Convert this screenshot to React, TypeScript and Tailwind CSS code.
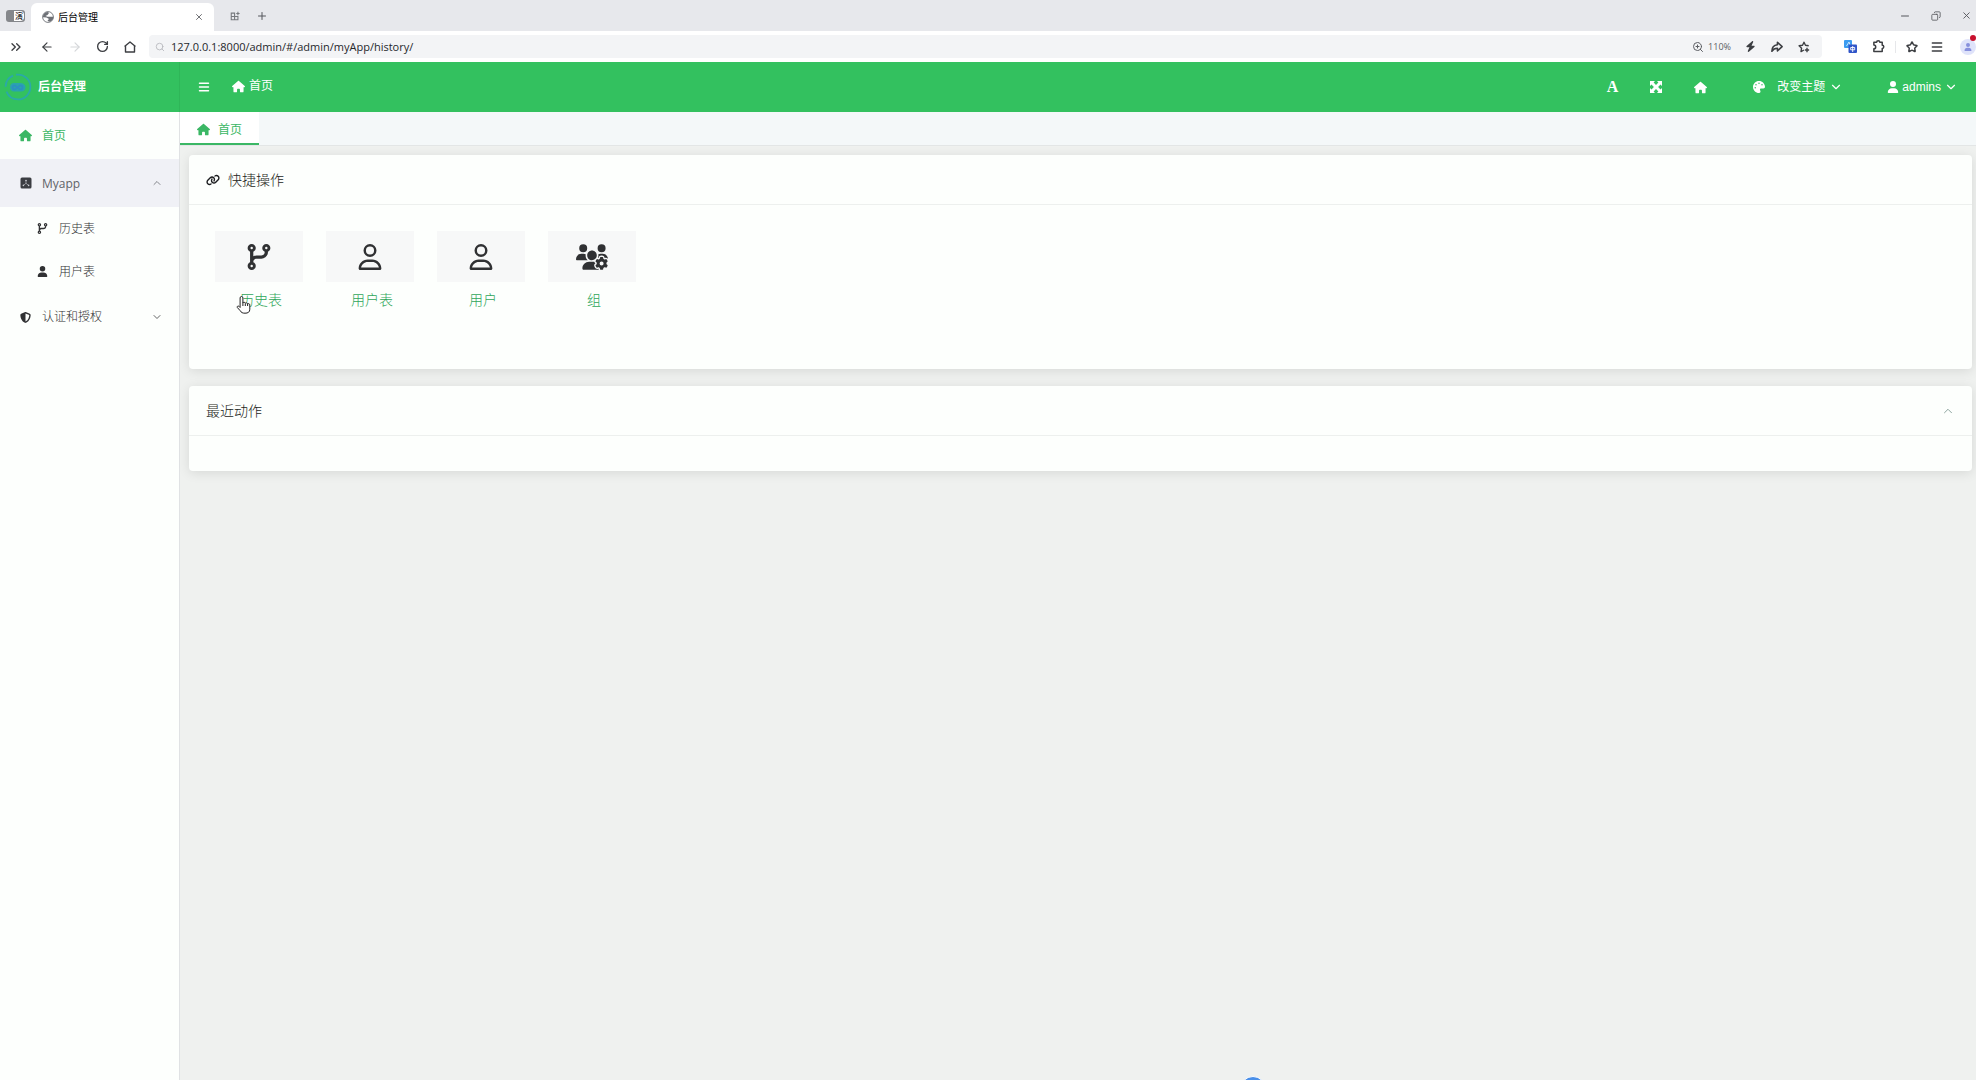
import React from "react";
import type { IconType } from "react-icons";
import {
  FaBars, FaBolt, FaCodeBranch, FaHouse, FaLink,
  FaPalette, FaRegUser, FaShieldHalved, FaUser, FaUsersGear,
} from "react-icons/fa6";
import {
  ChevronDown, ChevronUp, ChevronsRight, ArrowLeft, ArrowRight, Copy, Menu,
  Minus, Plus, RotateCw, Search, Star, X, ZoomIn,
} from "lucide-react";

interface LinkItem {
  label: string;
  icon: IconType;
}

const quickActions: LinkItem[] = [
  { label: "历史表", icon: FaCodeBranch },
  { label: "用户表", icon: FaRegUser },
  { label: "用户", icon: FaRegUser },
  { label: "组", icon: FaUsersGear },
];

const subItems: LinkItem[] = [
  { label: "历史表", icon: FaCodeBranch },
  { label: "用户表", icon: FaUser },
];

const AppSquare = () => (
  <svg viewBox="0 0 12 12" className="h-3 w-3">
    <rect x="0.5" y="0.5" width="11" height="11" rx="1.5" fill="#3b3d42" />
    <path d="M6 3.2v3L3.3 8.6M6 6.2l2.7 2.4" stroke="#a9abb1" strokeWidth="0.8" fill="none" />
    <circle cx="6" cy="3.5" r="0.8" fill="#c9cbd1" />
    <circle cx="3.4" cy="8.4" r="0.8" fill="#c9cbd1" />
    <circle cx="8.6" cy="8.4" r="0.8" fill="#c9cbd1" />
  </svg>
);

const Globe = () => (
  <svg viewBox="0 0 12 12" className="h-3 w-3">
    <circle cx="6" cy="6" r="5.4" fill="#fff" stroke="#6d7076" strokeWidth="0.9" />
    <path d="M1 5C1.5 2.5 3.5 1 6 1l1 1-1.5 2L3.5 5l2 .8h5.9c0 2.800-1.800 4.600-4.400 5L5.500 9.500 7 8 4.500 6.500 1 6.300z" fill="#6d7076" />
  </svg>
);

const Logo = () => (
  <svg viewBox="0 0 28 28" className="h-7 w-7">
    <circle cx="14" cy="14" r="12.4" fill="none" stroke="#2ba9a8" strokeWidth="1.8" strokeDasharray="34 5 14 3" />
    <path d="M9.500 10h6c3.200 0 6 1.500 6 4.300s-2 4.200-4.500 4.200H10c-2.500 0-4-1.700-4-4.200S7.500 10 9.500 10z" fill="#2aa3ae" />
    <path d="M10.500 12.500a2 2 0 1 0 0 4c2 0 4-4 6-4a2 2 0 1 1 0 4c-2 0-4-4-6-4z" fill="none" stroke="#2c8fc4" strokeWidth="1.4" />
  </svg>
);

const FullScreen = () => (
  <svg viewBox="0 0 12 12" className="h-3 w-3" fill="currentColor">
    <path d="M0 0h5L3.600 1.500 6 3.900l2.400-2.400L7 0h5v5l-1.500-1.400L8.100 6l2.400 2.400L12 7v5H7l1.400-1.500L6 8.100l-2.400 2.400L5 12H0V7l1.500 1.400L3.900 6 1.500 3.600 0 5z" />
  </svg>
);

const HandCursor = () => (
  <svg viewBox="0 0 16 20" className="pointer-events-none absolute left-[21px] top-16 h-5 w-4">
    <path d="M5.500 1.500c.9 0 1.400.6 1.400 1.400v5c.3-1 2.300-.8 2.400.4.500-.8 2.200-.6 2.300.6.600-.6 2.200-.3 2.200 1v4.300c0 3-1.800 4-4.800 4-2.500 0-3.700-.6-4.800-2.500L1.300 12.500c-.6-1.100.9-2 1.800-1.100l1 1.100V2.900c0-.8.500-1.400 1.400-1.400z" fill="#fff" stroke="#222" strokeWidth="1" />
    <path d="M6.900 7.500V11M9.300 8.500v2.500M11.600 9v2" stroke="#222" strokeWidth="1" />
  </svg>
);

const TabStrip = () => (
  <div className="flex h-[31px] items-center bg-[#e7e8ec] text-[#55575c]">
    <button aria-label="工作区" className="ml-1.5 mr-1.5 flex h-3 w-[19px] items-center justify-end rounded-[3px] bg-[#85878b] p-px">
      <span className="flex h-2.5 w-2.5 items-center justify-center rounded-r-sm bg-white text-[8px] leading-none text-black">演</span>
    </button>
    <div className="flex h-7 w-[183px] items-center self-end rounded-t-md bg-white pl-[11px] pr-2.5">
      <Globe />
      <span className="ml-1 flex-1 text-[10px] text-black">后台管理</span>
      <button aria-label="关闭标签页"><X size={10} strokeWidth={2} /></button>
    </div>
    <button aria-label="标签页操作" className="ml-4">
      <svg viewBox="0 0 12 12" className="h-2.5 w-2.5" fill="none" stroke="#77797d" strokeWidth="1.3">
        <path d="M1.500 2.500h4v8h-4zM1.500 6.500h8v4h-4v-8M9.500 1v4M7.500 3h4" />
      </svg>
    </button>
    <button aria-label="新建标签页" className="ml-4"><Plus size={12} strokeWidth={2} /></button>
    <div className="ml-auto flex items-center gap-5 pr-1">
      <button aria-label="最小化"><Minus size={12} /></button>
      <button aria-label="还原"><Copy size={10} className="-scale-x-100" /></button>
      <button aria-label="关闭"><X size={11} /></button>
    </div>
  </div>
);

const Toolbar = () => (
  <div className="flex h-[31px] items-center bg-white text-[#3c3e42]">
    <div className="flex w-[149px] items-center gap-3.5 pl-2">
      <button aria-label="展开" className="mr-1"><ChevronsRight size={16} className="-mr-0.5" /></button>
      <button aria-label="后退"><ArrowLeft size={14} /></button>
      <button aria-label="前进" className="text-[#d5d7da]"><ArrowRight size={14} /></button>
      <button aria-label="刷新"><RotateCw size={13} strokeWidth={2.5} /></button>
      <button aria-label="主页">
        <svg viewBox="0 0 14 14" className="h-3.5 w-3.5" fill="none" stroke="currentColor" strokeWidth="1.4" strokeLinejoin="round">
          <path d="M1.500 6.500 7 2l5.500 4.500M2.500 6v6h9V6" />
        </svg>
      </button>
    </div>
    <div className="flex h-[23px] flex-1 items-center rounded bg-[#f3f4f6] pl-1.5 pr-3">
      <Search size={10} className="text-[#b4b6ba]" />
      <input
        aria-label="地址"
        defaultValue="127.0.0.1:8000/admin/#/admin/myApp/history/"
        className="ml-1.5 min-w-0 flex-1 bg-transparent pt-0.5 text-[11px] text-[#26282c] outline-none"
      />
      <ZoomIn size={12} className="text-[#5c5e63]" />
      <span className="ml-1 text-[9px] text-[#5c5e63]">110%</span>
      <div className="ml-3.5 flex items-center gap-[15px]">
        <button aria-label="加速"><FaBolt size={11} /></button>
        <button aria-label="分享">
          <svg viewBox="0 0 14 14" className="h-3 w-3" fill="none" stroke="currentColor" strokeWidth="1.8" strokeLinejoin="round">
            <path d="M7.500 1.500 13 6.500l-5.500 5V8.500C4.500 8.500 2.500 9.500 1 12c0-4 2.500-7 6.500-7.500z" />
          </svg>
        </button>
        <button aria-label="收藏">
          <svg viewBox="0 0 14 14" className="h-3 w-3" fill="none" stroke="currentColor" strokeWidth="1.6" strokeLinejoin="round">
            <path d="M12.500 5.600 8.700 5 7 1.400 5.300 5l-4 .6 2.900 2.800-.7 4L7 10.500M10.500 8v5M8 10.500h5" />
          </svg>
        </button>
      </div>
    </div>
    <div className="flex items-center pl-[22px]">
      <button aria-label="翻译" className="h-[13px] w-[13px]">
        <svg viewBox="0 0 13 13" className="h-[13px] w-[13px]">
          <rect width="8" height="8" rx="1" fill="#3b9cf0" />
          <path d="M2.500 6 5 2l1 3" stroke="#d6ebff" fill="none" strokeWidth="0.9" />
          <rect x="4.500" y="4.500" width="8.500" height="8.500" rx="1" fill="#2f55c8" />
          <path d="M6.700 7.500h4v2.300h-4zM8.700 6v6" stroke="#fff" fill="none" strokeWidth="0.9" />
        </svg>
      </button>
      <button aria-label="扩展" className="ml-[15px]">
        <svg viewBox="0 0 14 14" className="h-[13px] w-[13px]" fill="none" stroke="currentColor" strokeWidth="1.6" strokeLinejoin="round">
          <path d="M2 2.500h3a1.700 1.700 0 0 1 3.400 0H11v3.200a1.700 1.700 0 0 1 0 3.400v3.400H2V9.500a2 2 0 0 0 0-4z" />
        </svg>
      </button>
      <span className="ml-2.5 h-3 w-px bg-[#e6e7ea]"></span>
      <button aria-label="收藏夹" className="ml-2.5"><Star size={12} strokeWidth={3} /></button>
      <button aria-label="菜单" className="ml-3"><Menu size={14} strokeWidth={2.5} /></button>
      <button aria-label="账户" className="relative ml-4 flex h-4 w-4 items-center justify-center rounded-full bg-[#dfe3fa] text-[#8790dd]">
        <FaUser size={8} />
        <span className="absolute -top-1 right-0 h-1.5 w-1.5 rounded-full bg-[#c8102e]"></span>
      </button>
    </div>
  </div>
);

const Header = () => (
  <header className="flex h-[50px] items-center bg-[#33c15f] text-xs text-white">
    <div className="flex h-full w-[180px] items-center gap-1.5 border-r border-[#2fb658] pl-1">
      <Logo />
      <h1 className="font-bold">后台管理</h1>
    </div>
    <button aria-label="折叠菜单" className="ml-[18px]"><FaBars size={12} /></button>
    <a href="#home" className="ml-[22px] flex items-center gap-1 pb-0.5"><FaHouse size={13} />首页</a>
    <div className="ml-auto flex items-center pr-[18px]">
      <button aria-label="字体" className="font-['Liberation_Serif',serif] text-base font-bold">A</button>
      <button aria-label="全屏" className="ml-8"><FullScreen /></button>
      <button aria-label="主页" className="ml-8"><FaHouse size={13} /></button>
      <button className="ml-[46px] flex items-center"><FaPalette size={12} /><span className="ml-3">改变主题</span><ChevronDown size={14} strokeWidth={2} className="ml-1" /></button>
      <button className="ml-11 flex items-center gap-[3px] font-['Liberation_Sans',sans-serif]"><FaUser size={12} />admins<ChevronDown size={14} strokeWidth={2} /></button>
    </div>
  </header>
);

const Sidebar = () => (
  <nav className="w-[180px] shrink-0 border-r border-[#e0e2e4] bg-[#fdfffd] text-xs text-[#303133]">
    <a href="#home" className="flex h-[47px] items-center gap-2.5 pl-[19px] text-[#3bb765]"><FaHouse size={13} />首页</a>
    <button className="flex h-12 w-full items-center bg-[#f0f1f6] pl-5 pr-4 text-[#606368]">
      <AppSquare />
      <span className="ml-2.5 flex-1 pt-0.5 text-left">Myapp</span>
      <ChevronUp size={12} strokeWidth={1.5} />
    </button>
    {subItems.map(({ label, icon: Icon }) => (
      <a key={label} href="#table" className="flex h-[43px] items-center pl-[37px] font-light">
        <Icon size={11} />
        <span className="ml-[11px]">{label}</span>
      </a>
    ))}
    <button className="flex h-12 w-full items-center pl-5 pr-4 font-light">
      <FaShieldHalved size={11} />
      <span className="ml-[11px] flex-1 text-left">认证和授权</span>
      <ChevronDown size={12} strokeWidth={1.5} />
    </button>
  </nav>
);

const App = () => {
  return <div className="relative flex h-screen flex-col overflow-hidden bg-[#eff1ef] font-['Open_Sans','Noto_Sans_CJK_SC',sans-serif]">
    <TabStrip />
    <Toolbar />
    <Header />
    <div className="flex min-h-0 flex-1">
      <Sidebar />
      <main className="min-w-0 flex-1">
        <div className="flex h-[34px] border-b border-[#e3e6e6] bg-[#f4f8f9]">
          <button className="flex w-[79px] items-center justify-center gap-2 border-b-2 border-[#3bb765] bg-white pt-1 text-xs text-[#3bb765]"><FaHouse size={13} />首页</button>
        </div>
        <div className="flex flex-col gap-[17px] py-[9px] pl-[9px] pr-1">
          <section className="h-[214px] rounded bg-[#fdfffd] shadow-[0_2px_12px_rgba(0,0,0,0.1)]">
            <h2 className="flex h-[50px] items-center gap-2 border-b border-[#edf0ee] pl-[17px] text-sm font-light text-[#1c1d20]"><FaLink size={14} />快捷操作</h2>
            <div className="flex gap-[23px] pl-[26px] pt-[26px]">
              {quickActions.map(({ label, icon: Icon }, index) => (
                <a key={label} href="#action" className="relative w-[88px] text-center">
                  <span className="flex h-[51px] items-center justify-center bg-[#f7f8f8] text-[#303133]"><Icon className="h-[26px] w-8" /></span>
                  <span className="mt-2 block pl-1 text-sm font-light text-[#2fa65a]">{label}</span>
                  {index === 0 && <HandCursor />}
                </a>
              ))}
            </div>
          </section>
          <section className="h-[85px] rounded bg-[#fdfffd] shadow-[0_2px_12px_rgba(0,0,0,0.1)]">
            <div className="flex h-[50px] items-center justify-between border-b border-[#edf0ee] px-[17px] text-sm font-light text-[#1c1d20]">
              <h2>最近动作</h2>
              <button aria-label="收起"><ChevronUp size={14} strokeWidth={1.5} className="text-[#7d9791]" /></button>
            </div>
          </section>
        </div>
      </main>
    </div>
    <span className="absolute -bottom-[22px] left-[1240px] h-[26px] w-[26px] rounded-full border border-white bg-[#4a8fe8]"></span>
  </div>;
};

export default App;
